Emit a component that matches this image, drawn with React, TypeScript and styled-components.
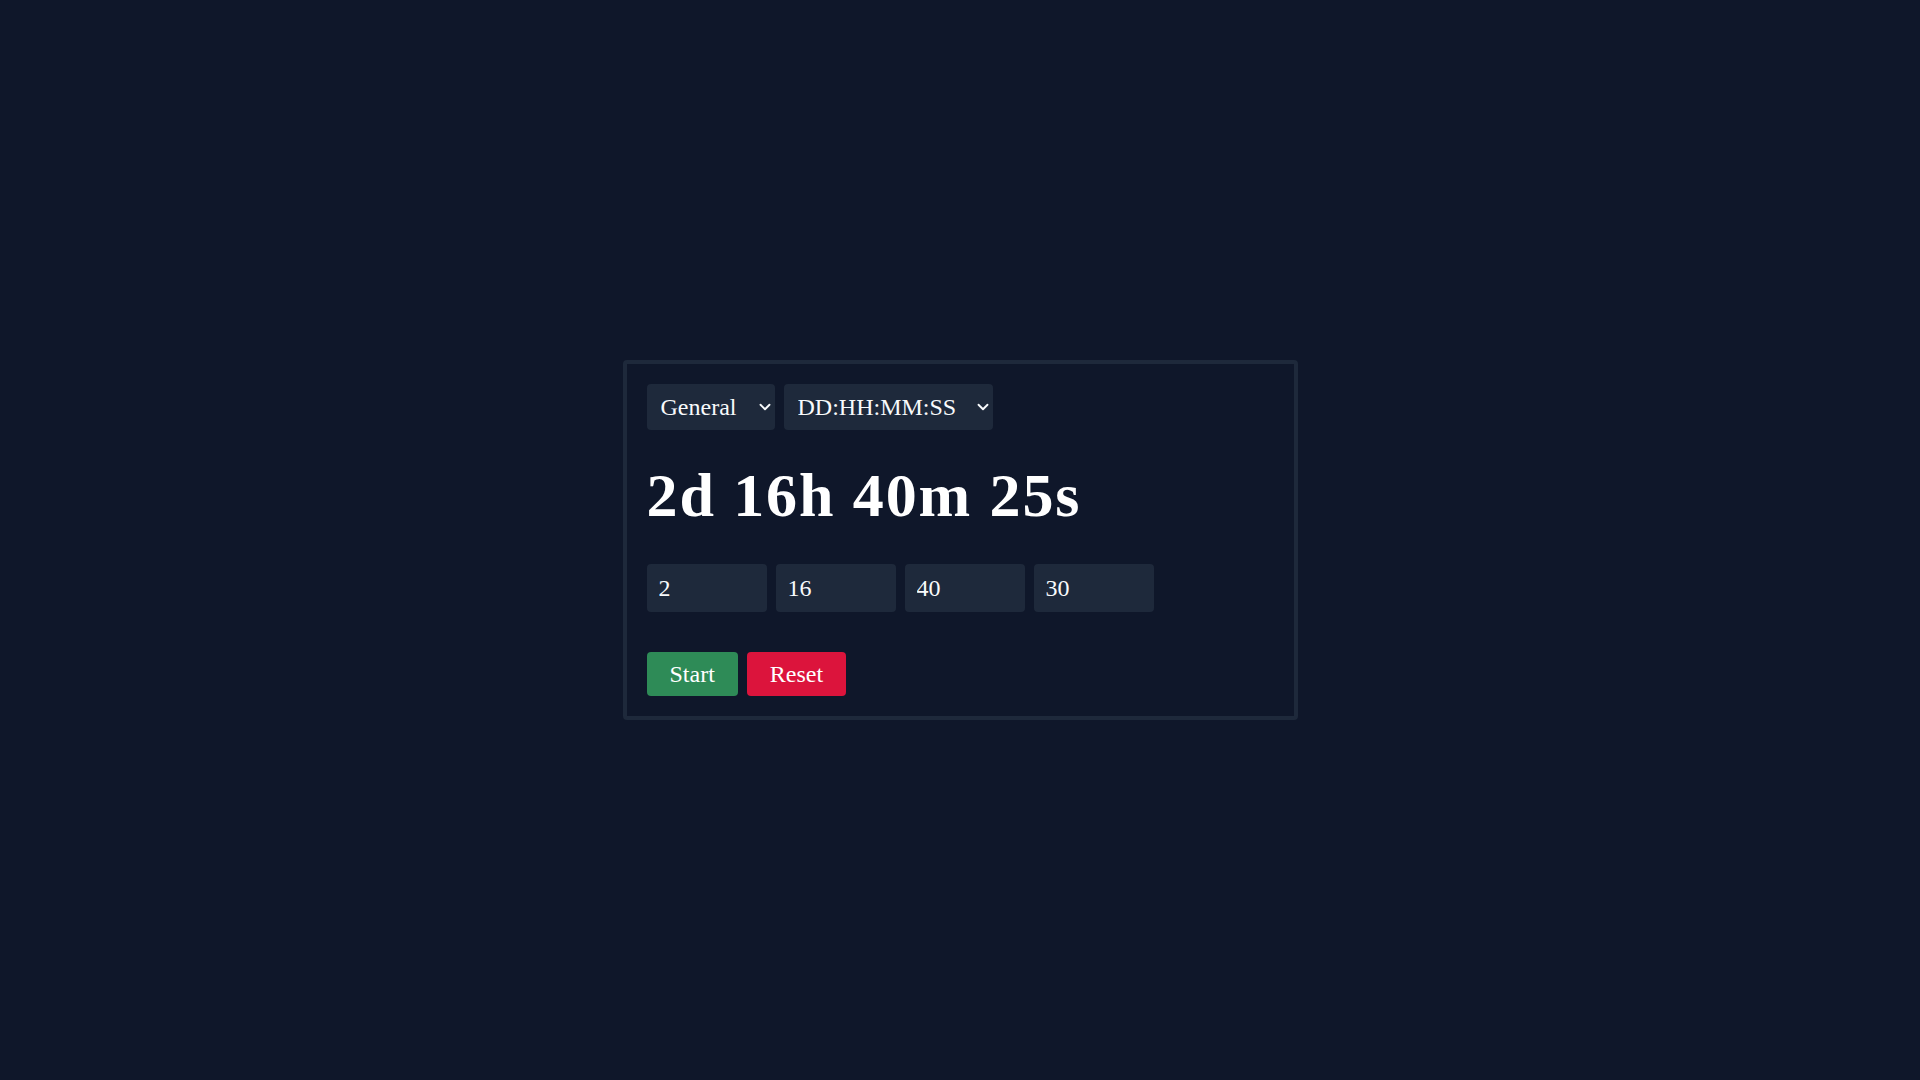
import React from "react";
import styled, { createGlobalStyle } from "styled-components";
import { ChevronDown } from "lucide-react";

const GlobalStyle = createGlobalStyle`
  html, body {
    margin: 0;
    padding: 0;
    background: #0f172a;
    color: #f8fafc;
    font-family: "Liberation Serif", "DejaVu Serif", serif;
  }
`;

const Page = styled.main`
  min-height: 100vh;
  display: flex;
  align-items: center;
  justify-content: center;
`;

const Card = styled.section`
  box-sizing: border-box;
  width: 675px;
  padding: 20px;
  border: 4px solid #1e293b;
  border-radius: 4px;
  display: flex;
  flex-direction: column;
  align-items: flex-start;
`;

const Row = styled.div<{ $mb?: number }>`
  display: flex;
  gap: 9px;
  margin-bottom: ${(p) => p.$mb ?? 0}px;
`;

const SelectWrap = styled.div<{ $width: number }>`
  position: relative;
  width: ${(p) => p.$width}px;

  svg {
    position: absolute;
    right: 1px;
    top: 50%;
    transform: translateY(-50%);
    pointer-events: none;
    color: #f8fafc;
  }
`;

const Select = styled.select`
  appearance: none;
  box-sizing: border-box;
  width: 100%;
  height: 46px;
  padding: 0 14px;
  border: none;
  border-radius: 4px;
  background: #1e293b;
  color: #f8fafc;
  font-family: inherit;
  font-size: 24px;
  outline: none;
`;

const Display = styled.h1`
  margin: 29px 0 33px;
  font-size: 62px;
  line-height: 72px;
  font-weight: 700;
  letter-spacing: 1.9px;
  color: #ffffff;
`;

const Field = styled.input`
  box-sizing: border-box;
  width: 120px;
  height: 48px;
  padding: 0 12px;
  border: none;
  border-radius: 4px;
  background: #1e293b;
  color: #f8fafc;
  font-family: inherit;
  font-size: 24px;
  outline: none;
`;

const Button = styled.button<{ $tone: "go" | "stop" }>`
  height: 44px;
  padding: 0 23px;
  border: none;
  border-radius: 4px;
  background: ${(p) => (p.$tone === "go" ? "#2e8b57" : "#dc143c")};
  color: #ffffff;
  font-family: inherit;
  font-size: 24px;
  cursor: pointer;
`;

const App = () => {
  return (
    <>
      <GlobalStyle />
      <Page>
        <Card>
          <Row>
            <SelectWrap $width={128}>
              <Select defaultValue="general">
                <option value="general">General</option>
              </Select>
              <ChevronDown size={18} strokeWidth={2.5} />
            </SelectWrap>
            <SelectWrap $width={209}>
              <Select defaultValue="dhms">
                <option value="dhms">DD:HH:MM:SS</option>
              </Select>
              <ChevronDown size={18} strokeWidth={2.5} />
            </SelectWrap>
          </Row>

          <Display>2d 16h 40m 25s</Display>

          <Row $mb={40}>
            <Field defaultValue="2" />
            <Field defaultValue="16" />
            <Field defaultValue="40" />
            <Field defaultValue="30" />
          </Row>

          <Row>
            <Button $tone="go">Start</Button>
            <Button $tone="stop">Reset</Button>
          </Row>
        </Card>
      </Page>
    </>
  );
};

export default App;
